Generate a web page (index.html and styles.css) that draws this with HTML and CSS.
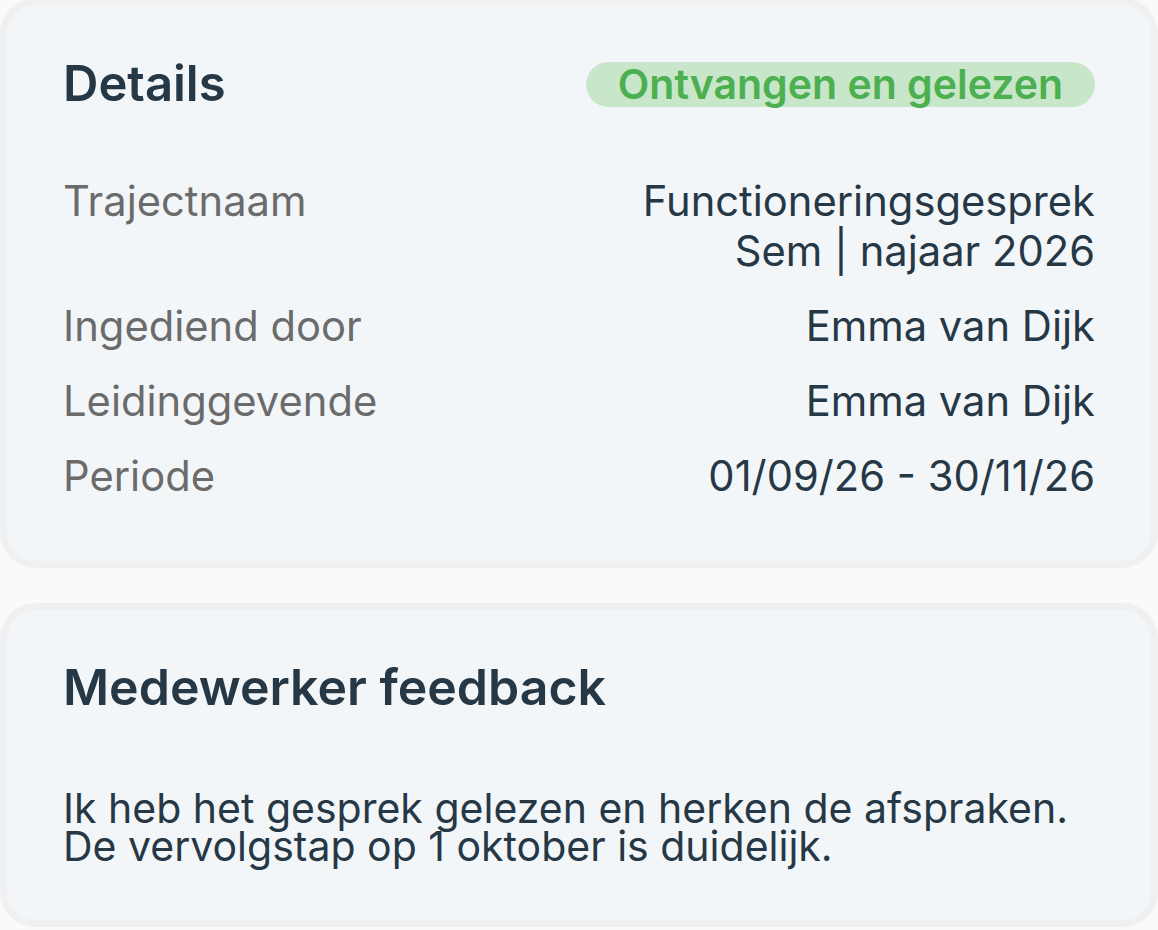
FILE: index.html
```html
<!DOCTYPE html>
<html lang="nl">

  <head>
    <meta charset="UTF-8">
    <meta name="viewport" content="width=device-width, initial-scale=1.0">
    <title>Details</title>
    <link rel="stylesheet" href="styles.css">
  </head>

  <body>
    <div class="card details">
      <div class="card-head">
        <h2 class="card-title">Details</h2>
        <span class="badge">Ontvangen en gelezen</span>
      </div>
      <div class="rows">
        <div class="row">
          <span class="label">Trajectnaam</span>
          <span class="value">Functioneringsgesprek<br>Sem | najaar 2026</span>
        </div>
        <div class="row">
          <span class="label">Ingediend door</span>
          <span class="value">Emma van Dijk</span>
        </div>
        <div class="row">
          <span class="label">Leidinggevende</span>
          <span class="value">Emma van Dijk</span>
        </div>
        <div class="row">
          <span class="label">Periode</span>
          <span class="value">01/09/26 - 30/11/26</span>
        </div>
      </div>
    </div>

    <div class="card feedback">
      <h2 class="card-title">Medewerker feedback</h2>
      <p class="feedback-text">Ik heb het gesprek gelezen en herken de afspraken.<br>De vervolgstap op 1 oktober is duidelijk.</p>
    </div>
  </body>

</html>
```

FILE: styles.css
```css
body {
  margin: 0;
  padding: 0 0 2px 0;
  background-color: #fafafa;
  font-family: Inter, "Noto Sans", sans-serif;
  color: #263845;
}

.card {
  background-color: #f3f6f9;
  border: 7px solid #f0f0f0;
  border-radius: 36px;
  padding: 0 56px 0 56px;
}

.details {
  margin-top: -2px;
  padding-top: 50px;
  padding-bottom: 60px;
}

.card-head {
  display: flex;
  justify-content: space-between;
  align-items: center;
}

.card-title {
  margin: 0;
  font-size: 49px;
  font-weight: 600;
  line-height: 58px;
}

.badge {
  display: inline-block;
  height: 45px;
  line-height: 45px;
  padding: 0 32px;
  border-radius: 23px;
  background-color: #c8e6c9;
  color: #4caf50;
  font-size: 41px;
  font-weight: 600;
}

.rows {
  display: flex;
  flex-direction: column;
  gap: 25px;
  margin-top: 63px;
}

.row {
  display: flex;
  justify-content: space-between;
  font-size: 41.7px;
  line-height: 50px;
}

.label {
  color: #6b6b6b;
}

.value {
  text-align: right;
}

.feedback {
  margin-top: 35px;
  padding-top: 48px;
  padding-bottom: 55px;
}

.feedback .card-title {
  font-size: 50px;
}

.feedback-text {
  margin: 73px 0 0 0;
  font-size: 41px;
  line-height: 38px;
}
```
